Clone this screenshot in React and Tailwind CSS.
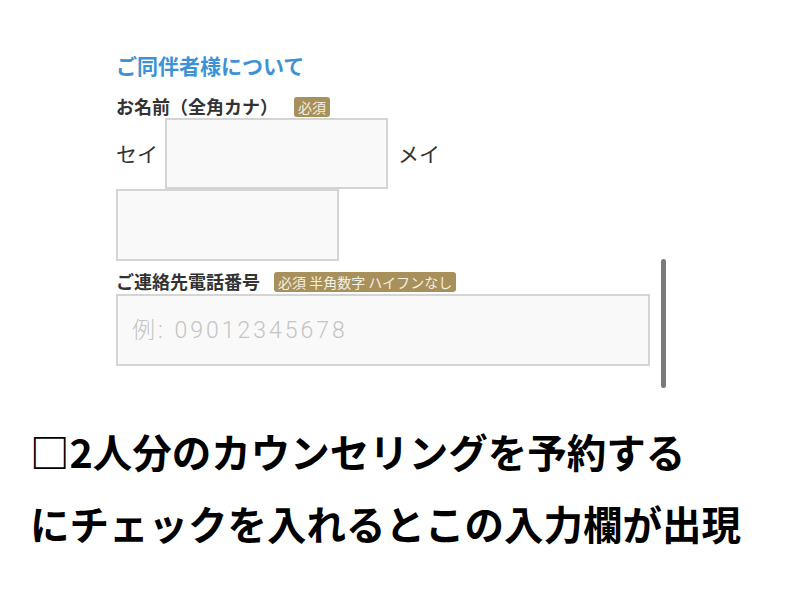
import React from "react";

const jp = { fontFamily: '"Noto Sans CJK JP", "Noto Sans", sans-serif' };

function Badge({ children }) {
  return (
    <span className="inline-flex h-[20px] items-center rounded-[3px] bg-[#a8905a] px-[4px] text-[14px] leading-none text-[#f4efe2]">
      {children}
    </span>
  );
}

function Box({ className }) {
  return <div className={"border-2 border-[#d4d4d4] bg-[#f9f9f9] " + className} />;
}

export default function App() {
  return (
    <div className="relative h-[600px] w-[800px] overflow-hidden bg-white text-[#333]" style={jp}>
      <div className="pl-[116px] pt-[53px]">
        <h2 className="text-[21px] font-bold leading-[24px] text-[#3d92d5]">ご同伴者様について</h2>

        <div className="mt-[17px] flex items-center">
          <span className="text-[18px] font-bold leading-[20px] text-[#333]">お名前（全角カナ）</span>
          <span className="ml-[16px]">
            <Badge>必須</Badge>
          </span>
        </div>

        <div className="flex items-center">
          <span className="w-[49px] text-[21px] leading-none text-[#333]">セイ</span>
          <Box className="h-[71px] w-[223px]" />
          <span className="ml-[10px] text-[21px] leading-none text-[#333]">メイ</span>
        </div>
        <Box className="h-[72px] w-[223px]" />

        <div className="mt-[8px] flex items-center">
          <span className="text-[18px] font-bold leading-[20px] text-[#333]">ご連絡先電話番号</span>
          <span className="ml-[14px]">
            <Badge>必須 半角数字 ハイフンなし</Badge>
          </span>
        </div>
        <div className="mt-[1px] flex h-[72px] w-[534px] items-center border-2 border-[#d4d4d4] bg-[#f9f9f9] pl-[14px]">
          <span
            className="text-[23px] font-light leading-none tracking-[3px] text-[#c4c4c4]"
            style={{ fontFamily: 'Roboto, "Noto Sans CJK JP", sans-serif' }}
          >
            例: 09012345678
          </span>
        </div>
      </div>

      <div className="absolute left-[661px] top-[259px] h-[129px] w-[5px] rounded-full bg-[#7a7a7a]" />

      <div className="pl-[30px] pt-[49px] text-[39.5px] font-bold leading-[72px] text-black">
        <p>□2人分のカウンセリングを予約する</p>
        <p>にチェックを入れるとこの入力欄が出現</p>
      </div>
    </div>
  );
}
